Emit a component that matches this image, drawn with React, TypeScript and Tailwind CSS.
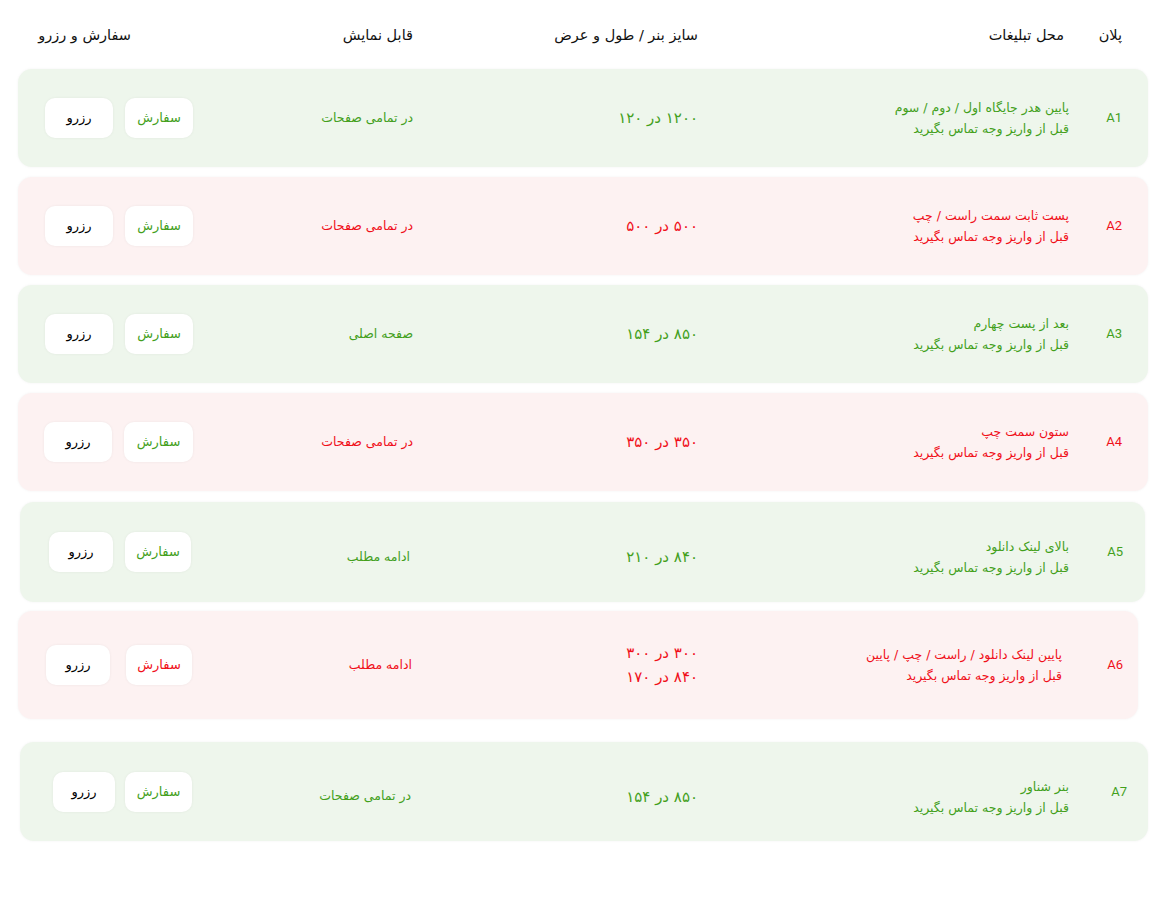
const plans = [
  {
    code: 'A1',
    place: 'پایین هدر جایگاه اول / دوم / سوم',
    sizes: ['۱۲۰۰ در ۱۲۰'],
    show: 'در تمامی صفحات',
    tone: 'green',
    orderTone: 'green',
    box: 'ml-[18px] mr-[21px] h-[98px] mt-[0px] pr-[26px] grid-cols-[53px_371px_285px_220px_1fr]',
    order: 'w-[68px]',
    reserve: 'w-[68px] mr-[12px]',
    shift: '',
  },
  {
    code: 'A2',
    place: 'پست ثابت سمت راست / چپ',
    sizes: ['۵۰۰ در ۵۰۰'],
    show: 'در تمامی صفحات',
    tone: 'red',
    orderTone: 'green',
    box: 'ml-[18px] mr-[21px] h-[98px] mt-[10px] pr-[26px] grid-cols-[53px_371px_285px_220px_1fr]',
    order: 'w-[68px]',
    reserve: 'w-[68px] mr-[12px]',
    shift: '',
  },
  {
    code: 'A3',
    place: 'بعد از پست چهارم',
    sizes: ['۸۵۰ در ۱۵۴'],
    show: 'صفحه اصلی',
    tone: 'green',
    orderTone: 'green',
    box: 'ml-[18px] mr-[21px] h-[98px] mt-[10px] pr-[26px] grid-cols-[53px_371px_285px_220px_1fr]',
    order: 'w-[68px]',
    reserve: 'w-[68px] mr-[12px]',
    shift: '',
  },
  {
    code: 'A4',
    place: 'ستون سمت چپ',
    sizes: ['۳۵۰ در ۳۵۰'],
    show: 'در تمامی صفحات',
    tone: 'red',
    orderTone: 'green',
    box: 'ml-[18px] mr-[21px] h-[98px] mt-[10px] pr-[26px] grid-cols-[53px_371px_285px_220px_1fr]',
    order: 'w-[69px]',
    reserve: 'w-[68px] mr-[12px]',
    shift: '',
  },
  {
    code: 'A5',
    place: 'بالای لینک دانلود',
    sizes: ['۸۴۰ در ۲۱۰'],
    show: 'ادامه مطلب',
    tone: 'green',
    orderTone: 'green',
    box: 'ml-[20px] mr-[24px] h-[100px] mt-[11px] pr-[22px] grid-cols-[54px_371px_288px_219px_1fr]',
    order: 'w-[66px]',
    reserve: 'w-[64px] mr-[12px]',
    shift: 'pt-[10px]',
  },
  {
    code: 'A6',
    place: 'پایین لینک دانلود / راست / چپ / پایین',
    sizes: ['۳۰۰ در ۳۰۰', '۸۴۰ در ۱۷۰'],
    show: 'ادامه مطلب',
    tone: 'red',
    orderTone: 'red',
    box: 'ml-[18px] mr-[31px] h-[108px] mt-[9px] pr-[15px] grid-cols-[61px_364px_286px_220px_1fr]',
    order: 'w-[66px]',
    reserve: 'w-[64px] mr-[16px]',
    shift: '',
  },
  {
    code: 'A7',
    place: 'بنر شناور',
    sizes: ['۸۵۰ در ۱۵۴'],
    show: 'در تمامی صفحات',
    tone: 'green',
    orderTone: 'green',
    box: 'ml-[20px] mr-[21px] h-[99px] mt-[23px] pr-[21px] grid-cols-[58px_371px_287px_219px_1fr]',
    order: 'w-[67px]',
    reserve: 'w-[62px] mr-[10px]',
    shift: 'pt-[10px]',
  },
];

const font = { fontFamily: '"DejaVu Sans", "Noto Sans", sans-serif' };

function Row({ p }: { p: (typeof plans)[number] }) {
  const text = p.tone === 'green' ? 'text-[#43a01c]' : 'text-[#f0101a]';
  const bg = p.tone === 'green' ? 'bg-[#eef6ec]' : 'bg-[#fdf2f2]';
  const orderText = p.orderTone === 'green' ? 'text-[#43a01c]' : 'text-[#f0101a]';

  return (
    <div className={`${p.box} ${bg} rounded-[14px] shadow-[0_0_3px_rgba(0,0,0,0.05)] grid items-center`}>
      <div className={`${text} text-[13px] text-right`} style={{ fontFamily: 'Roboto, sans-serif' }}>
        {p.code}
      </div>
      <div className={`${text} text-[12.5px] leading-[21px] ${p.shift}`}>
        <div>{p.place}</div>
        <div>قبل از واریز وجه تماس بگیرید</div>
      </div>
      <div className={`${text} text-[15px] leading-[24px] ${p.shift}`}>
        {p.sizes.map((s) => (
          <div key={s}>{s}</div>
        ))}
      </div>
      <div className={`${text} text-[12.5px] ${p.shift}`}>{p.show}</div>
      <div className="flex">
        <button className={`${p.order} h-[40px] rounded-[10px] bg-white shadow-[0_0_3px_rgba(0,0,0,0.06)] text-[13px] ${orderText}`}>
          سفارش
        </button>
        <button className={`${p.reserve} h-[40px] rounded-[10px] bg-white shadow-[0_0_3px_rgba(0,0,0,0.06)] text-[13px] text-black`}>
          رزرو
        </button>
      </div>
    </div>
  );
}

export default function App() {
  return (
    <div dir="rtl" className="w-[1169px] min-h-[909px] bg-white pt-[24px]" style={font}>
      <div className="grid grid-cols-[58px_366px_285px_282px_1fr] items-center h-[24px] mr-[47px] ml-[18px] text-[14.5px] text-[#111]">
        <div>پلان</div>
        <div>محل تبلیغات</div>
        <div>سایز بنر / طول و عرض</div>
        <div>قابل نمایش</div>
        <div>سفارش و رزرو</div>
      </div>
      <div className="mt-[21px]">
        {plans.map((p) => (
          <Row key={p.code} p={p} />
        ))}
      </div>
    </div>
  );
}
